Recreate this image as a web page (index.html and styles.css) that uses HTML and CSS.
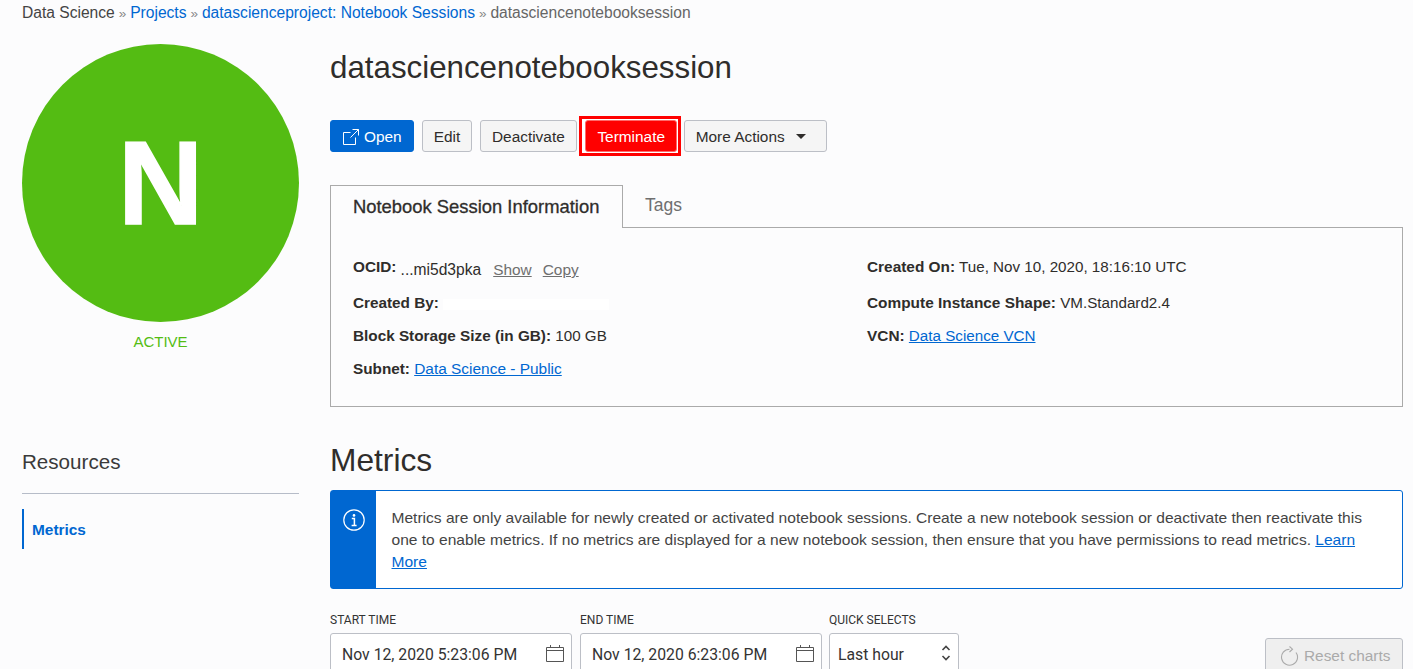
FILE: index.html
```html
<!DOCTYPE html>
<html lang="en">
<head>
<meta charset="utf-8">
<title>datasciencenotebooksession</title>
<link rel="stylesheet" href="styles.css">
</head>
<body>
<nav class="crumbs"><span class="crumb-first">Data Science</span> <span class="sep">»</span> <a href="#">Projects</a> <span class="sep">»</span> <a href="#">datascienceproject: Notebook Sessions</a> <span class="sep">»</span> <span class="crumb-last">datasciencenotebooksession</span></nav>
<div class="page">
  <aside class="side">
    <div class="avatar">N</div>
    <div class="status">ACTIVE</div>
    <h2 class="res-title">Resources</h2>
    <a class="res-link" href="#">Metrics</a>
  </aside>
  <main class="content">
    <h1 class="title">datasciencenotebooksession</h1>
    <div class="actions">
      <button class="btn btn-primary"><svg class="ico-open" viewBox="0 0 18 18" width="18" height="18" fill="none" stroke="#fff" stroke-width="1"><path d="M13.5 9.5v7h-12v-12h7"/><path d="M10.5 1.5h6v6"/><path d="M16.5 1.5l-8 8"/></svg>Open</button>
      <button class="btn btn-edit">Edit</button>
      <button class="btn">Deactivate</button>
      <span class="highlight"><button class="btn btn-danger">Terminate</button></span>
      <button class="btn btn-more">More Actions<span class="caret"></span></button>
    </div>
    <div class="tabs">
      <div class="tab active">Notebook Session Information</div>
      <div class="tab">Tags</div>
    </div>
    <section class="panel">
      <div class="col col-a">
        <div class="row"><b class="ocid-label">OCID:</b> <span class="ocid">...mi5d3pka</span><a class="muted" href="#">Show</a><a class="muted" href="#">Copy</a></div>
        <div class="row"><b>Created By:</b><span class="redact"></span></div>
        <div class="row"><b>Block Storage Size (in GB):</b> 100 GB</div>
        <div class="row"><b>Subnet:</b> <a class="link-wide" href="#">Data Science - Public</a></div>
      </div>
      <div class="col col-b">
        <div class="row row-first"><b>Created On:</b> Tue, Nov 10, 2020, 18:16:10 UTC</div>
        <div class="row"><b>Compute Instance Shape:</b> VM.Standard2.4</div>
        <div class="row"><b>VCN:</b> <a href="#">Data Science VCN</a></div>
      </div>
    </section>
    <h2 class="metrics">Metrics</h2>
    <div class="notice">
      <div class="notice-icon"><svg viewBox="0 0 24 24" width="24" height="24" fill="none" stroke="#fff"><circle cx="12" cy="12" r="10.2" stroke-width="1.2"/><circle cx="12" cy="7.4" r="1.3" fill="#fff" stroke="none"/><path d="M9.8 10.6h2.6v6.6M9.6 17.4h5" stroke-width="1.5"/></svg></div>
      <p class="notice-text">Metrics are only available for newly created or activated notebook sessions. Create a new notebook session or deactivate then reactivate this one to enable metrics. If no metrics are displayed for a new notebook session, then ensure that you have permissions to read metrics. <a href="#">Learn More</a></p>
    </div>
    <div class="filters">
      <div class="field field-date">
        <label class="flabel">START TIME</label>
        <div class="input">Nov 12, 2020 5:23:06 PM<svg class="cal" viewBox="0 0 18 18" width="18" height="18" fill="none" stroke="#555"><path d="M.5 3.5h17v14H.5zM.5 6.5h17M4.5 1v3M13.5 1v3"/></svg></div>
      </div>
      <div class="field field-date">
        <label class="flabel">END TIME</label>
        <div class="input">Nov 12, 2020 6:23:06 PM<svg class="cal" viewBox="0 0 18 18" width="18" height="18" fill="none" stroke="#555"><path d="M.5 3.5h17v14H.5zM.5 6.5h17M4.5 1v3M13.5 1v3"/></svg></div>
      </div>
      <div class="field field-quick">
        <label class="flabel">QUICK SELECTS</label>
        <div class="input input-quick">Last hour<svg class="updown" viewBox="0 0 10 18" width="10" height="18" fill="none" stroke="#444" stroke-width="1.6"><path d="M1.5 6L5 2.5 8.5 6M1.5 12L5 15.5 8.5 12"/></svg></div>
      </div>
      <button class="btn btn-reset"><svg viewBox="0 0 20 20" width="20" height="20" fill="none" stroke="#aaa" stroke-width="1.1"><path d="M16 6.5A8 8 0 1 1 9.5 3.2"/><path d="M9.5 .5l3 2.700-3 2.800"/></svg>Reset charts</button>
    </div>
  </main>
</div>
</body>
</html>
```
FILE: styles.css
```css
* { box-sizing: border-box; }
html, body { height: 669px; overflow: hidden; }
body {
  margin: 0;
  background: #fcfcfd;
  color: #2f2d2b;
  font-family: "Liberation Sans", Arial, sans-serif;
  font-size: 15.4px;
}
a { color: #0067d1; }
.crumbs {
  padding: 4px 0 0 22px;
  height: 44px;
  line-height: 17px;
  font-size: 15.6px;
}
.crumbs a { text-decoration: none; }
.crumb-first { color: #444; }
.crumb-last { color: #666; }
.sep { margin: 0 -.4px; font-size: 13.5px; color: #888; }
.page { display: flex; padding: 0 10px 0 22px; gap: 31px; }
.side { width: 277px; flex: none; }
.avatar {
  width: 277px;
  height: 278px;
  border-radius: 50%;
  background: #54bc13;
  color: #fff;
  font-size: 118px;
  font-weight: 700;
  line-height: 278px;
  text-align: center;
  -webkit-text-stroke: 1.5px #fff;
}
.status { margin-top: 11px; text-align: center; font-size: 15px; line-height: 17px; color: #54bc13; }
.res-title {
  margin: 100px 0 0;
  padding-bottom: 19px;
  font-size: 20.6px;
  font-weight: 400;
  line-height: 24px;
  color: #3a3a3a;
  border-bottom: 1px solid #b6bcc8;
}
.res-link {
  display: block;
  margin-top: 15px;
  height: 40px;
  padding: 1px 0 0 8px;
  line-height: 40px;
  border-left: 2px solid #0067d1;
  font-weight: 700;
  text-decoration: none;
}
.content { flex: 1; min-width: 0; }
.title { margin: 0; font-size: 31.3px; font-weight: 400; line-height: 48px; }
.actions { display: flex; align-items: center; gap: 8px; margin-top: 28px; height: 32px; }
.btn {
  height: 32px;
  padding: 1px 11px 0;
  background: #f5f5f5;
  border: 1px solid #bcbfc6;
  border-radius: 3px;
  color: #2f2d2b;
  font: 15.4px/30px "Liberation Sans", Arial, sans-serif;
  white-space: nowrap;
}
.btn-edit { width: 50px; padding: 1px 0 0; }
.btn-primary {
  display: flex;
  align-items: center;
  gap: 4px;
  width: 84px;
  background: #0067d1;
  border-color: #0067d1;
  color: #fff;
}
.highlight {
  display: block;
  flex: none;
  width: 102px;
  height: 40px;
  margin: 0 -5px 0 -6px;
  padding: 1px 1px 1px 3px;
  background: #fff;
  border: 3px solid #f00;
}
.btn-danger {
  display: block;
  width: 92px;
  height: 32px;
  padding: 1px 0 0 1px;
  background: #f00;
  border-color: #ff6a6a;
  color: #fff;
}
.btn-more { display: flex; align-items: center; width: 143px; }
.caret { margin-left: 11px; border: 5px solid transparent; border-top: 5px solid #2f2d2b; border-bottom: 0; }
.tabs { display: flex; margin-top: 33px; height: 43px; }
.tab { padding: 0 22px; line-height: 40px; font-size: 17.5px; color: #6f6f6f; }
.tab.active {
  width: 293px;
  height: 43px;
  position: relative;
  z-index: 1;
  padding-top: 1px;
  background: #fcfcfd;
  border: 1px solid #aaa;
  border-bottom: 0;
  color: #2f2d2b;
  font-size: 18.4px;
  -webkit-text-stroke: .3px #2f2d2b;
}
.panel {
  display: flex;
  height: 180px;
  margin-top: -1px;
  padding: 28px 22px 0;
  border: 1px solid #aaa;
  font-size: 15.2px;
}
.col-a b { font-size: 15.3px; }
.col-b b { font-size: 15.4px; }
.col-a { width: 514px; flex: none; }
.row { height: 33px; line-height: 27px; white-space: nowrap; }
.ocid-label { position: relative; top: -3px; }
.ocid { margin-right: 12px; font-size: 15.6px; }
.muted { color: #6f6f6f; margin-right: 11px; font-size: 15.4px; }
.link-wide { font-size: 15.45px; }
.col-b { margin-top: -3px; }
.row-first { height: 36px; }
.redact { display: inline-block; width: 166px; height: 11px; margin-left: 4px; background: #fff; vertical-align: -2px; }
.metrics { margin: 32px 0 0; font-size: 31.7px; font-weight: 400; line-height: 42px; }
.notice {
  display: flex;
  height: 99px;
  margin-top: 9px;
  border: 1px solid #0067d1;
  border-radius: 3px;
  background: #fff;
}
.notice-icon { width: 45px; flex: none; padding: 17px 0 0 11px; background: #0067d1; }
.notice-icon svg { display: block; }
.notice-text { margin: 0; padding: 16px 24px 0 15.5px; font-size: 15.55px; line-height: 22px; color: #444; }
.filters { display: flex; gap: 8px; margin-top: 24px; position: relative; }
.flabel { display: block; height: 14px; font-size: 12px; line-height: 14px; color: #333; font-family: "Roboto", sans-serif; }
.field { flex: none; }
.field-date { width: 242px; }
.field-quick { width: 130px; margin-left: -1px; }
.input {
  display: flex;
  align-items: center;
  justify-content: space-between;
  height: 46px;
  margin-top: 6px;
  padding: 0 7px 3px 11px;
  background: #fff;
  border: 1px solid #bcbfc6;
  border-radius: 3px 3px 0 0;
  font-size: 15.75px;
  font-family: "Roboto", sans-serif;
  color: #333;
}
.input-quick { padding-left: 8px; }
.cal, .updown { margin-top: -3px; }
.btn-reset {
  display: flex;
  align-items: center;
  gap: 4px;
  width: 138px;
  height: 40px;
  margin: 25px 0 0 auto;
  padding: 0 0 4px 14px;
  background: #efefef;
  color: #aaa;
}
```
